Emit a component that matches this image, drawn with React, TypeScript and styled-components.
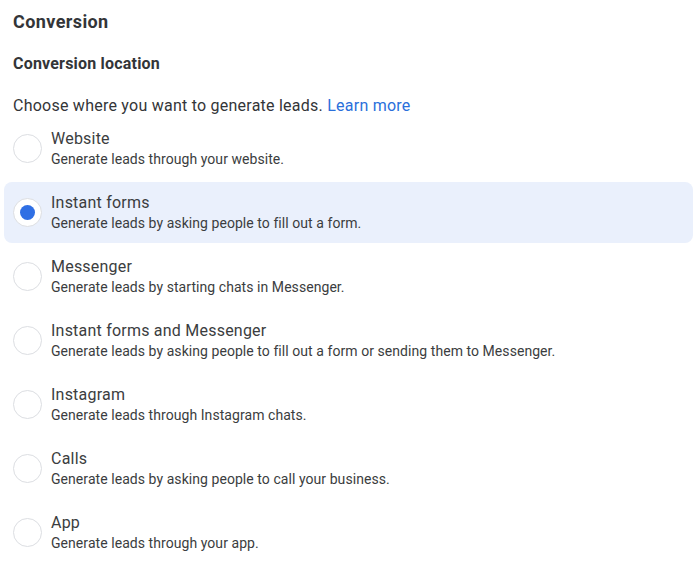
import styled, { createGlobalStyle } from "styled-components"

const Global = createGlobalStyle`
  body {
    margin: 0;
    background: #ffffff;
    font-family: Roboto, "Liberation Sans", Arial, sans-serif;
    color: #1c1e21;
  }
`

type Option = { title: string; desc: string }

const options: Option[] = [
  { title: "Website", desc: "Generate leads through your website." },
  { title: "Instant forms", desc: "Generate leads by asking people to fill out a form." },
  { title: "Messenger", desc: "Generate leads by starting chats in Messenger." },
  {
    title: "Instant forms and Messenger",
    desc: "Generate leads by asking people to fill out a form or sending them to Messenger.",
  },
  { title: "Instagram", desc: "Generate leads through Instagram chats." },
  { title: "Calls", desc: "Generate leads by asking people to call your business." },
  { title: "App", desc: "Generate leads through your app." },
]

const Page = styled.div`
  width: 700px;
  height: 569px;
  padding: 9px 7px 0 4px;
  box-sizing: border-box;
  display: flex;
  flex-direction: column;
`

const Heading = styled.h2`
  margin: 0 0 0 9px;
  font-size: 18px;
  line-height: 26px;
  font-weight: 700;
  letter-spacing: 0.4px;
  color: #333538;
`

const SubHeading = styled.h3`
  margin: 18px 0 0 9px;
  font-size: 16px;
  line-height: 22px;
  font-weight: 700;
  letter-spacing: 0.2px;
  color: #333538;
`

const Intro = styled.p`
  margin: 20px 0 0 9px;
  font-size: 16px;
  line-height: 22px;
  letter-spacing: 0.24px;
  color: #333538;
`

const Link = styled.a`
  color: #2a6fdb;
  text-decoration: none;
`

const List = styled.div`
  margin-top: 1px;
  display: flex;
  flex-direction: column;
  gap: 3px;
`

const Row = styled.label<{ $selected?: boolean }>`
  height: 61px;
  display: flex;
  align-items: center;
  gap: 9px;
  padding: 0 10px 0 9px;
  border-radius: 8px;
  background: ${(p) => (p.$selected ? "#eaf0fc" : "transparent")};
  cursor: pointer;
`

const Radio = styled.span<{ $checked?: boolean }>`
  width: 29px;
  height: 29px;
  flex: none;
  box-sizing: border-box;
  border-radius: 50%;
  border: 1px solid #dcdee2;
  background: #ffffff;
  display: flex;
  align-items: center;
  justify-content: center;

  &::after {
    content: "";
    width: 15px;
    height: 15px;
    border-radius: 50%;
    background: #2f6fe4;
    display: ${(p) => (p.$checked ? "block" : "none")};
  }
`

const Texts = styled.div`
  display: flex;
  flex-direction: column;
  padding-top: 1px;
`

const Title = styled.span`
  font-size: 16px;
  line-height: 21px;
  letter-spacing: 0.22px;
  color: #3b3d40;
`

const Desc = styled.span`
  font-size: 14px;
  line-height: 21px;
  letter-spacing: 0.06px;
  color: #3b3d40;
`

export default function App() {
  const selected = 1
  return (
    <>
      <Global />
      <Page>
        <Heading>Conversion</Heading>
        <SubHeading>Conversion location</SubHeading>
        <Intro>
          Choose where you want to generate leads. <Link href="#">Learn more</Link>
        </Intro>
        <List>
          {options.map((o, i) => (
            <Row key={o.title} $selected={i === selected}>
              <Radio $checked={i === selected} />
              <Texts>
                <Title>{o.title}</Title>
                <Desc>{o.desc}</Desc>
              </Texts>
            </Row>
          ))}
        </List>
      </Page>
    </>
  )
}
